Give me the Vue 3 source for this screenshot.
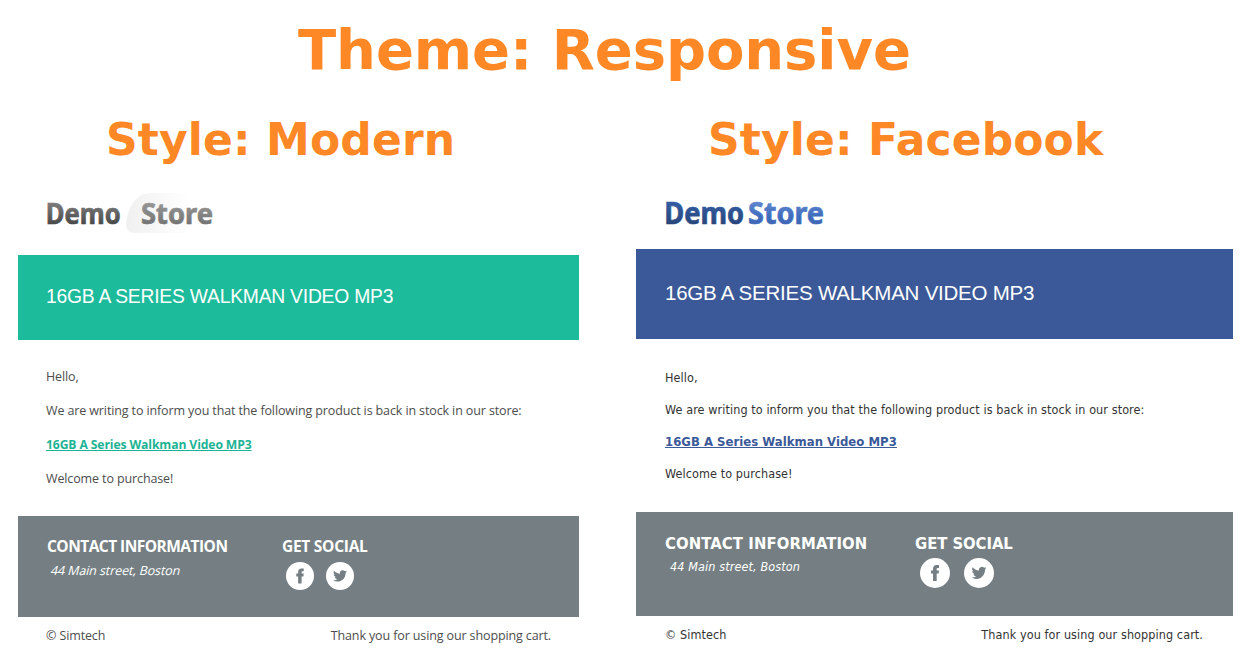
<script setup>
const emails = [
  { key: 'modern', style: 'Style: Modern' },
  { key: 'facebook', style: 'Style: Facebook' },
]
</script>

<template>
  <main class="page">
    <h1>Theme: Responsive</h1>
    <div class="previews">
      <section v-for="mail in emails" :key="mail.key" class="preview" :class="mail.key">
        <h2>{{ mail.style }}</h2>
        <div class="logo">
          <svg v-if="mail.key === 'modern'" width="190" height="42" viewBox="0 0 190 42">
            <defs>
              <linearGradient id="mDemo" x1="0" y1="0" x2="0" y2="1"><stop offset=".25" stop-color="#7b7b7b" /><stop offset=".8" stop-color="#484848" /></linearGradient>
              <linearGradient id="mStore" x1="0" y1="0" x2="0" y2="1"><stop offset=".2" stop-color="#999" /><stop offset=".8" stop-color="#737373" /></linearGradient>
              <linearGradient id="mLeaf"><stop offset="0" stop-color="#f0f0f0" /><stop offset=".8" stop-color="#fff" /></linearGradient>
            </defs>
            <path d="M104 1H160V41H88Q81 41 80 33C81 15 91 1 104 1Z" fill="url(#mLeaf)" />
            <text x="-.2" y="32" textLength="74.8" lengthAdjust="spacingAndGlyphs" fill="url(#mDemo)" stroke="url(#mDemo)">Demo</text>
            <text x="95" y="32" textLength="72" lengthAdjust="spacingAndGlyphs" fill="url(#mStore)" stroke="url(#mStore)">Store</text>
          </svg>
          <svg v-else width="190" height="42" viewBox="0 0 190 42">
            <defs>
              <linearGradient id="fDemo" x1="0" y1="0" x2="0" y2="1"><stop offset=".25" stop-color="#335da3" /><stop offset=".8" stop-color="#28457a" /></linearGradient>
              <linearGradient id="fStore" x1="0" y1="0" x2="0" y2="1"><stop offset=".2" stop-color="#6489d0" /><stop offset=".6" stop-color="#3f6cbd" /><stop offset=".8" stop-color="#3e67b5" /></linearGradient>
            </defs>
            <text x="-.8" y="32" textLength="79.8" lengthAdjust="spacingAndGlyphs" fill="url(#fDemo)" stroke="url(#fDemo)">Demo</text>
            <text x="83" y="32" textLength="76" lengthAdjust="spacingAndGlyphs" fill="url(#fStore)" stroke="url(#fStore)">Store</text>
          </svg>
        </div>
        <div class="banner">16GB A SERIES WALKMAN VIDEO MP3</div>
        <div class="body">
          <p>Hello,</p>
          <p>We are writing to inform you that the following product is back in stock in our store:</p>
          <p><a>16GB A Series Walkman Video MP3</a></p>
          <p>Welcome to purchase!</p>
        </div>
        <div class="info">
          <div class="contact">
            <h3>CONTACT INFORMATION</h3>
            <address>44 Main street, Boston</address>
          </div>
          <div class="social">
            <h3>GET SOCIAL</h3>
            <div class="icons">
              <svg viewBox="0 0 30 30">
                <circle cx="15" cy="15" r="15" fill="#fff" />
                <path d="M13 23V15.6H11V12.4H13V10.8C13 8.1 14.4 6.9 16.5 6.9H19V10H17.8C17 10 16.7 10.4 16.7 11.2V12.4H19L18.7 15.6H16.7V23Z" fill="#757f83" />
              </svg>
              <svg viewBox="0 0 30 30">
                <circle cx="15" cy="15" r="15" fill="#fff" />
                <path transform="translate(7.6 7.4) scale(.62)" d="M23.95 4.57a10 10 0 0 1-2.82.77 4.96 4.96 0 0 0 2.16-2.72c-.95.55-2 .95-3.13 1.18a4.92 4.92 0 0 0-8.38 4.48C7.69 8.1 4.07 6.13 1.64 3.16a4.92 4.92 0 0 0 1.52 6.57 4.9 4.9 0 0 1-2.23-.61v.06a4.92 4.92 0 0 0 3.95 4.83 5 5 0 0 1-2.21.08 4.94 4.94 0 0 0 4.6 3.42A9.87 9.87 0 0 1 0 19.54a14 14 0 0 0 7.55 2.21c9.05 0 14-7.5 14-13.98 0-.21 0-.42-.02-.63a9.94 9.94 0 0 0 2.42-2.57Z" fill="#757f83" />
              </svg>
            </div>
          </div>
        </div>
        <footer>
          <span>© Simtech</span>
          <span>Thank you for using our shopping cart.</span>
        </footer>
      </section>
    </div>
  </main>
</template>

<style>
body { margin: 0; background: #fff; }
</style>

<style scoped>
.page { width: 1250px; height: 664px; overflow: hidden; box-sizing: border-box; padding: 0 17px 0 18px; }
h1, h2, h3, p { margin: 0; white-space: nowrap; }
h1, h2 { color: #ff8826; font-family: "DejaVu Sans", sans-serif; font-weight: bold; }
h1 { height: 100px; padding-left: 280px; font-size: 56px; line-height: 100px; letter-spacing: -0.08px; }
.previews { display: flex; justify-content: space-between; }
.preview { display: flex; flex-direction: column; white-space: nowrap; }
h2 { height: 80px; line-height: 80px; font-size: 44px; letter-spacing: 0.12px; }
.logo { box-sizing: border-box; padding-top: 12px; }
.logo svg { display: block; overflow: visible; }
.logo text { font: bold 28px "Noto Sans", sans-serif; stroke-width: .7px; letter-spacing: 0; }
.banner { color: #fff; font-family: "Liberation Sans", Arial, sans-serif; box-sizing: border-box; }
.body { box-sizing: border-box; }
.body a { font-weight: bold; text-decoration: underline; }
.info { display: flex; color: #fff; background: #757f83; box-sizing: border-box; }
.icons { display: flex; }
footer { display: flex; justify-content: space-between; }

.modern { width: 561px; font: 12.5px "Open Sans", sans-serif; color: #4d4d4d; letter-spacing: -0.12px; }
.modern h2 { padding-left: 88px; }
.modern .logo { height: 75px; padding-left: 28px; }
.modern .banner { height: 85px; padding-left: 28px; background: #1cbb9c; font-size: 19.3px; line-height: 83px; letter-spacing: -0.22px; }
.modern .body { height: 176px; padding: 20px 0 0 28px; line-height: 34px; }
.modern .body a { color: #1cb394; font-size: 12.2px; letter-spacing: -0.13px; }
.modern .info { height: 101px; padding: 19px 0 0 29px; }
.modern .contact { width: 235px; }
.modern h3 { font-size: 15.5px; line-height: 23px; letter-spacing: -0.53px; }
.modern .social h3 { letter-spacing: -0.27px; }
.modern address { width: max-content; padding-left: 4px; font-style: normal; font-size: 12.5px; line-height: 26px; transform: skewX(-14deg); letter-spacing: -0.1px; }
.modern .icons { gap: 12px; padding: 4px 0 0 4px; }
.modern .icons svg { width: 28px; height: 28px; }
.modern footer { padding: 0 28px; line-height: 37px; }

.facebook { width: 597px; font: 12.5px "DejaVu Sans Condensed", "DejaVu Sans", sans-serif; color: #333; letter-spacing: 0.09px; }
.facebook h2 { padding-left: 72px; }
.facebook .logo { height: 69px; padding-left: 29px; }
.facebook .logo text { font-size: 30px; }
.facebook .banner { height: 90px; padding-left: 29px; background: #3b5998; font-size: 20.5px; line-height: 88px; letter-spacing: -0.23px; }
.facebook .body { height: 173px; padding: 23px 0 0 29px; line-height: 32px; }
.facebook .body a { color: #3b5998; font-size: 13px; letter-spacing: 0.02px; }
.facebook .info { height: 104px; padding: 21px 0 0 29px; }
.facebook .contact { width: 250px; }
.facebook h3 { font-size: 16.5px; line-height: 22px; letter-spacing: 0.11px; }
.facebook .social h3 { letter-spacing: -0.05px; }
.facebook address { padding-left: 5px; font-style: italic; font-size: 12.5px; line-height: 24px; letter-spacing: 0.12px; }
.facebook .icons { gap: 14px; padding: 3px 0 0 5px; }
.facebook .icons svg { width: 30px; height: 30px; }
.facebook footer { padding: 0 30px 0 29px; line-height: 37px; }
</style>
